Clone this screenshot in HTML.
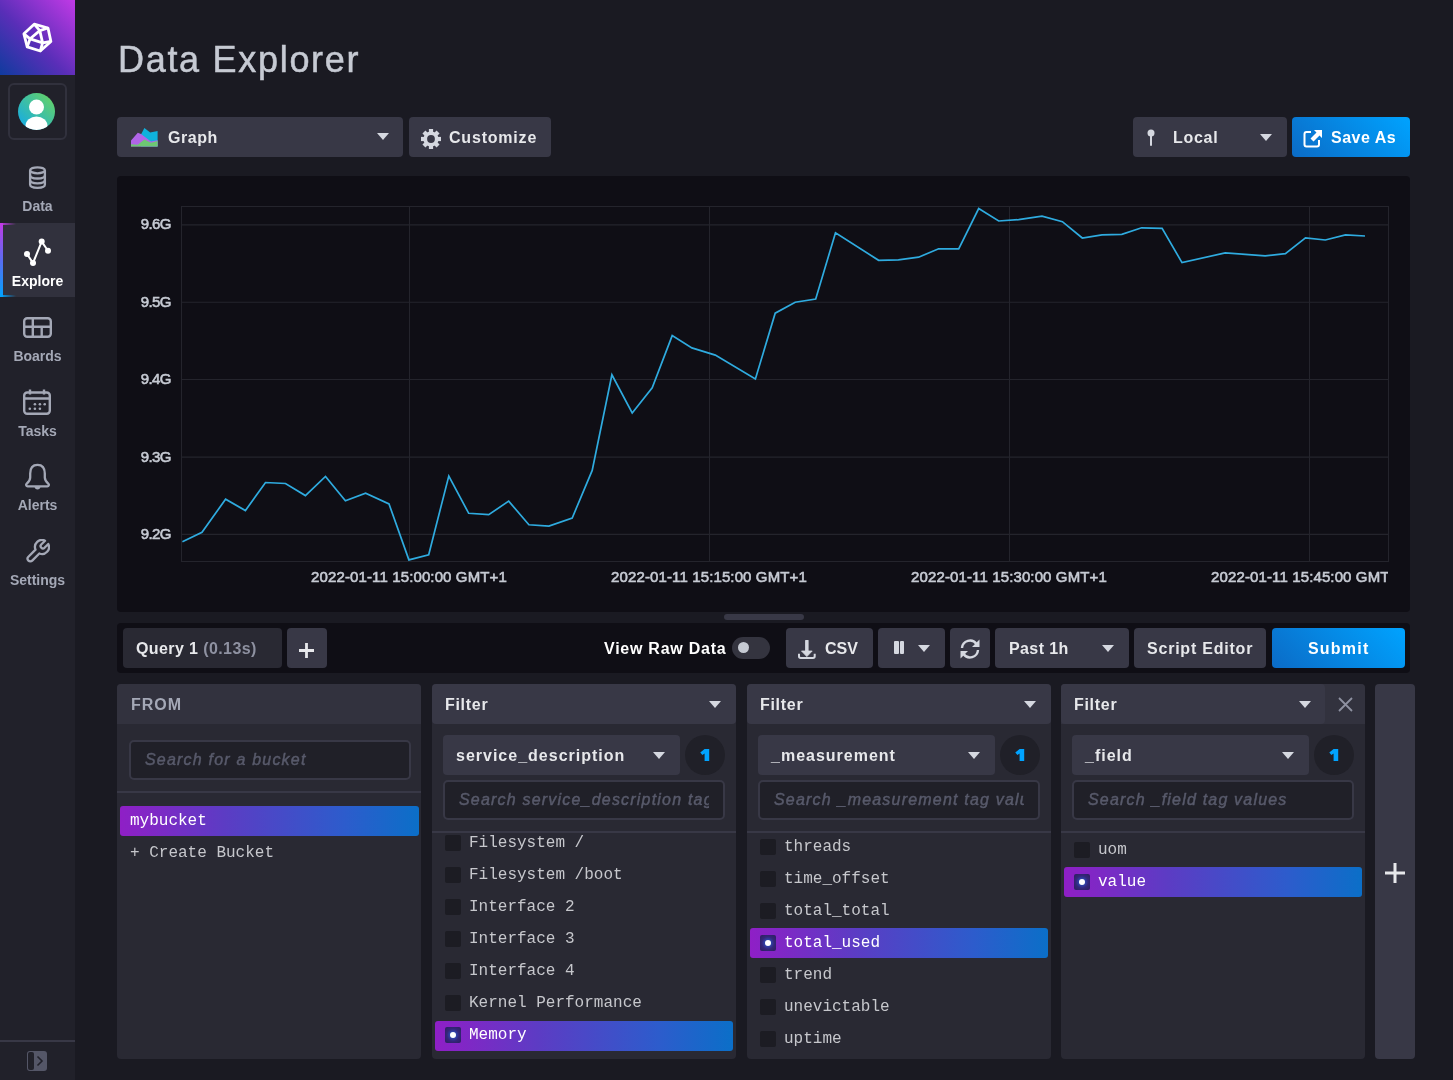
<!DOCTYPE html>
<html><head><meta charset="utf-8">
<style>
*{box-sizing:border-box;margin:0;padding:0}
html,body{width:1453px;height:1080px;overflow:hidden;background:#1a1a22;font-family:"Liberation Sans",sans-serif;color:#e7e8eb}
.a{position:absolute}
.nl{position:absolute;left:0;width:75px;text-align:center;font-weight:bold;font-size:14px;line-height:16px;color:#a4a8b6;white-space:nowrap}
.btn{position:absolute;background:#383846;border-radius:4px;height:40px;font-weight:bold;font-size:16px;color:#e7e8eb;white-space:nowrap}
.bt{position:absolute;top:12px;line-height:18px}
.caret{position:absolute;width:0;height:0;border-left:6px solid transparent;border-right:6px solid transparent;border-top:7px solid #d5d8e0}
.card{position:absolute;top:684px;height:375px;background:#292933;border-radius:4px}
.inp{position:absolute;height:40px;border:2px solid #383846;border-radius:5px;background:#202028;white-space:nowrap;overflow:hidden}
.ph{position:absolute;left:14px;top:8px;width:250px;overflow:hidden;white-space:nowrap;line-height:20px;font-style:italic;font-weight:normal;font-size:16px;color:#585a6b;-webkit-text-stroke:0.45px #585a6b;letter-spacing:1.2px}
.li{position:absolute;font-family:"Liberation Mono",monospace;font-size:16px;line-height:20px;color:#c6c7cc;white-space:pre}
.cb{position:absolute;width:16px;height:16px;background:#1c1c23;border-radius:2px}
.sel{position:absolute;background:linear-gradient(90deg,#8f1fc6 0%,#5c3cc4 35%,#2d5ccc 75%,#0b6fc8 100%);border-radius:3px}
.ylab{position:absolute;left:0;width:54px;text-align:right;font-size:15px;line-height:18px;font-weight:normal;-webkit-text-stroke:0.6px #c6cad3;letter-spacing:-0.55px;color:#c6cad3}
.xlab{position:absolute;top:392px;width:200px;text-align:center;font-size:15px;line-height:18px;font-weight:normal;-webkit-text-stroke:0.6px #c6cad3;color:#c6cad3;white-space:nowrap;letter-spacing:0.12px}
</style></head>
<body>
<div style="position:absolute;left:0;top:0;width:1453px;height:1080px;will-change:transform">
<div class="a" style="left:0;top:0;width:75px;height:1080px;background:#21212a"></div>
<div class="a" style="left:0;top:0;width:75px;height:75px;background:linear-gradient(45deg,#0f3b9e 0%,#5a2eb8 45%,#c13ae6 100%)"></div>
<svg class="a" style="left:21px;top:21px" width="34" height="34" viewBox="0 0 34 34">
  <g fill="none" stroke="#fff" stroke-width="2.8" stroke-linejoin="round">
    <path d="M13.2 3.2 L27 7 L29.9 20.5 L19.3 30 L6.2 25.8 L2.9 12.8 Z"/>
    <path d="M9.1 17.8 L18.8 9.6 L21.6 21.8 Z"/>
    <path d="M13.2 3.2 L18.8 9.6 L27 7 M29.9 20.5 L21.6 21.8 L19.3 30 M6.2 25.8 L9.1 17.8 L2.9 12.8"/>
  </g>
</svg>
<div class="a" style="left:8px;top:83px;width:59px;height:57px;border:2px solid #31313d;border-radius:6px"></div>
<svg class="a" style="left:18px;top:93px" width="37" height="37" viewBox="0 0 37 37">
  <defs><linearGradient id="av" x1="0" y1="1" x2="1" y2="0"><stop offset="0" stop-color="#0ea8f0"/><stop offset="1" stop-color="#6cd65a"/></linearGradient>
  <clipPath id="avc"><circle cx="18.5" cy="18.5" r="18.5"/></clipPath></defs>
  <circle cx="18.5" cy="18.5" r="18.5" fill="url(#av)"/>
  <g clip-path="url(#avc)" fill="#fff"><circle cx="18.5" cy="14" r="7.5"/><ellipse cx="18.5" cy="33" rx="11" ry="9.5"/></g>
</svg>
<svg class="a" style="left:28px;top:166px" width="19" height="23" viewBox="0 0 19 23">
  <g fill="none" stroke="#a4a8b6" stroke-width="2.3">
    <ellipse cx="9.5" cy="4.3" rx="7.4" ry="3"/>
    <path d="M2.1 4.3 V18.5 C2.1 20.6 5.4 21.8 9.5 21.8 C13.6 21.8 16.9 20.6 16.9 18.5 V4.3"/>
    <path d="M2.1 9.2 C2.1 11.3 5.4 12.5 9.5 12.5 C13.6 12.5 16.9 11.3 16.9 9.2"/>
    <path d="M2.1 14 C2.1 16.1 5.4 17.3 9.5 17.3 C13.6 17.3 16.9 16.1 16.9 14"/>
  </g>
</svg>
<div class="nl" style="top:198px">Data</div>
<div class="a" style="left:0;top:223px;width:75px;height:74px;background:#31313d"></div>
<div class="a" style="left:0;top:223px;width:3px;height:74px;background:linear-gradient(180deg,#c13ae6,#5b6cf0 50%,#00a3ff)"></div>
<div class="a" style="left:0;top:223px;width:16px;height:2px;background:linear-gradient(90deg,#c13ae6,rgba(193,58,230,0))"></div>
<div class="a" style="left:0;top:295px;width:16px;height:2px;background:linear-gradient(90deg,#00a3ff,rgba(0,163,255,0))"></div>
<svg class="a" style="left:22px;top:237px" width="31" height="31" viewBox="0 0 31 31">
  <g fill="#fff"><path d="M5 17 L11 26 L19.7 4.6 L26 13.7" fill="none" stroke="#fff" stroke-width="2"/>
  <circle cx="5" cy="17" r="3"/><circle cx="11" cy="26" r="3"/><circle cx="19.7" cy="4.6" r="3"/><circle cx="26" cy="13.7" r="3"/></g>
</svg>
<div class="nl" style="top:273px;color:#fff">Explore</div>
<svg class="a" style="left:23px;top:317px" width="29" height="21" viewBox="0 0 29 21">
  <g fill="none" stroke="#a4a8b6" stroke-width="2.4"><rect x="1.2" y="1.2" width="26.6" height="18.6" rx="3"/>
  <path d="M1.2 9.8 H27.8 M9.8 1.2 V19.8 M18.7 9.8 V19.8"/></g>
</svg>
<div class="nl" style="top:348px">Boards</div>
<svg class="a" style="left:23px;top:389px" width="28" height="26" viewBox="0 0 28 26">
  <g fill="none" stroke="#a4a8b6" stroke-width="2.4"><rect x="1.2" y="3.5" width="25.6" height="21.3" rx="3"/>
  <path d="M1.2 9.5 H26.8 M7 0.5 V5.5 M21 0.5 V5.5"/></g>
  <g fill="#a4a8b6"><circle cx="11.9" cy="15.2" r="1.3"/><circle cx="16.9" cy="15.2" r="1.3"/><circle cx="21.7" cy="15.2" r="1.3"/><circle cx="6.8" cy="19.8" r="1.3"/><circle cx="11.9" cy="19.8" r="1.3"/><circle cx="16.9" cy="19.8" r="1.3"/></g>
</svg>
<div class="nl" style="top:423px">Tasks</div>
<svg class="a" style="left:24px;top:463px" width="27" height="28" viewBox="0 0 27 28">
  <path d="M13.5 1.8 C8 1.8 6.2 6 6.2 10.5 V14.5 C6.2 17.5 4.5 19 2.6 20.8 C1.6 21.8 2.2 23.3 3.6 23.3 H23.4 C24.8 23.3 25.4 21.8 24.4 20.8 C22.5 19 20.8 17.5 20.8 14.5 V10.5 C20.8 6 19 1.8 13.5 1.8 Z" fill="none" stroke="#a4a8b6" stroke-width="2.3" stroke-linejoin="round"/>
  <path d="M10.5 23.5 C10.5 25.5 12 26.5 13.5 26.5 C15 26.5 16.5 25.5 16.5 23.5 Z" fill="#a4a8b6"/>
</svg>
<div class="nl" style="top:497px">Alerts</div>
<svg class="a" style="left:23px;top:539px" width="27" height="27" viewBox="0 0 27 27">
  <path d="M25.30 4.95 L21.47 8.78 A2.3 2.3 0 0 1 18.22 5.53 L22.05 1.70 A7.0 7.0 0 0 0 12.52 10.66 L5.42 17.76 A2.7 2.7 0 0 0 9.24 21.58 L16.34 14.48 A7.0 7.0 0 0 0 25.30 4.95 Z" fill="none" stroke="#a4a8b6" stroke-width="2.3" stroke-linejoin="round"/>
</svg>
<div class="nl" style="top:572px">Settings</div>
<div class="a" style="left:0;top:1040px;width:75px;height:2px;background:#383846"></div>
<div class="a" style="left:27px;top:1051px;width:20px;height:20px;background:#545667;border-radius:3px"></div>
<div class="a" style="left:28px;top:1052px;width:6px;height:18px;background:#21212a;border-radius:2px"></div>
<svg class="a" style="left:36px;top:1055px" width="8" height="12" viewBox="0 0 8 12"><path d="M1.5 1.5 L6 6 L1.5 10.5" fill="none" stroke="#21212a" stroke-width="1.6"/></svg>
<div class="a" style="left:118px;top:39px;font-size:36px;line-height:42px;color:#c6cad3;white-space:nowrap;letter-spacing:1.7px;-webkit-text-stroke:0.5px #c6cad3">Data Explorer</div>
<div class="btn" style="left:117px;top:117px;width:286px;"><svg class="a" style="left:14px;top:11px" width="27" height="19" viewBox="0 0 27 19">
    <path d="M10 6.5 L13.4 0 L19.2 4.4 L26.6 3.1 L26.6 18.5 L10 18.5 Z" fill="#0fb2dc"/>
    <path d="M0 12.6 L6.8 4.8 L10 6 L20 13.4 L26.6 12.2 L26.6 18.5 L0 18.5 Z" fill="#b065e8"/>
    <path d="M0 16.3 L6.8 16.7 L13.4 11.4 L20 14.7 L26.6 13 L26.6 18.5 L0 18.5 Z" fill="#6dc873"/>
  </svg><span class="bt" style="left:51px;letter-spacing:0.55px">Graph</span><div class="caret" style="left:260px;top:16px"></div></div>
<div class="btn" style="left:409px;top:117px;width:142px;"><svg class="a" style="left:10px;top:10px" width="24" height="24" viewBox="-12 -12 24 24"><g fill="#d5d8e0"><rect x="-2.1" y="-10" width="4.2" height="20" transform="rotate(0)"/><rect x="-2.1" y="-10" width="4.2" height="20" transform="rotate(45)"/><rect x="-2.1" y="-10" width="4.2" height="20" transform="rotate(90)"/><rect x="-2.1" y="-10" width="4.2" height="20" transform="rotate(135)"/><circle r="7.6"/></g><circle r="3.9" fill="#383846"/></svg><span class="bt" style="left:40px;letter-spacing:0.8px">Customize</span></div>
<div class="btn" style="left:1133px;top:117px;width:154px;"><svg class="a" style="left:13px;top:12px" width="10" height="18" viewBox="0 0 10 18"><circle cx="5" cy="4" r="3.5" fill="#d5d8e0"/><rect x="4" y="6" width="2" height="11" rx="1" fill="#d5d8e0"/></svg><span class="bt" style="left:40px;letter-spacing:0.7px">Local</span><div class="caret" style="left:127px;top:17px"></div></div>
<div class="btn" style="left:1292px;top:117px;width:118px;background:linear-gradient(45deg,#0b6bc6,#00a3ff);color:#fff"><svg class="a" style="left:11px;top:12px" width="20" height="19" viewBox="0 0 20 19"><path d="M8 3 H3.5 C2.4 3 1.5 3.9 1.5 5 V15.5 C1.5 16.6 2.4 17.5 3.5 17.5 H14 C15.1 17.5 16 16.6 16 15.5 V11" fill="none" stroke="#fff" stroke-width="2"/><path d="M11 1 H19 V9 L16.5 6.5 L10.5 12.5 L7.5 9.5 L13.5 3.5 Z" fill="#fff"/></svg><span class="bt" style="left:39px;letter-spacing:0.5px">Save As</span></div>
<div class="a" style="left:117px;top:176px;width:1293px;height:436px;background:#0f0e15;border-radius:4px">
  <svg class="a" style="left:0;top:0" width="1293" height="435">
    <g stroke="#24242c" stroke-width="1" shape-rendering="crispEdges" fill="none">
      <rect x="64.5" y="30.5" width="1207" height="355"/>
      
      <path d="M292.5 30.5 V385.5 M592.5 30.5 V385.5 M892.5 30.5 V385.5 M1192.5 30.5 V385.5"/>
    </g>
    <path d="M65 48.9 H1271 M65 126.2 H1271 M65 203.5 H1271 M65 281.1 H1271 M65 358.4 H1271" stroke="#24242c" stroke-width="1.1" fill="none"/>
    <polyline points="65.4,365.8 85.0,356.3 108.6,323.2 128.4,334.6 148.5,306.5 168.5,307.5 188.4,319.6 208.5,300.5 228.4,324.8 248.6,317.2 272.0,327.9 291.9,383.9 311.7,378.7 331.8,300.0 351.7,337.3 371.7,338.7 391.7,325.1 411.9,348.8 431.9,350.1 455.2,342.0 475.2,294.4 494.9,198.8 515.2,237.0 535.2,211.9 555.2,159.6 574.9,171.9 598.3,179.1 638.4,203.0 658.2,137.2 678.2,126.2 698.7,123.0 718.5,56.8 761.6,84.3 781.4,83.9 801.6,81.2 821.6,72.8 841.7,72.8 861.7,32.5 881.7,45.0 901.6,43.6 925.0,40.1 945.4,45.7 965.3,62.0 985.0,58.8 1004.8,58.3 1024.6,51.8 1045.1,52.3 1065.0,86.6 1108.2,76.9 1148.2,79.8 1168.4,77.6 1188.5,61.8 1208.3,64.0 1228.5,58.9 1248.0,60.0" fill="none" stroke="#2fabdf" stroke-width="1.7" stroke-linejoin="miter"/>
  </svg>
  <div class="ylab" style="top:39px">9.6G</div>
  <div class="ylab" style="top:117px">9.5G</div>
  <div class="ylab" style="top:194px">9.4G</div>
  <div class="ylab" style="top:272px">9.3G</div>
  <div class="ylab" style="top:349px">9.2G</div>
  <div class="xlab" style="left:192px">2022-01-11 15:00:00 GMT+1</div>
  <div class="xlab" style="left:492px">2022-01-11 15:15:00 GMT+1</div>
  <div class="xlab" style="left:792px">2022-01-11 15:30:00 GMT+1</div>
  <div class="a" style="left:1092px;top:392px;width:179px;height:20px;overflow:hidden"><div class="xlab" style="left:0;top:0">2022-01-11 15:45:00 GMT+1</div></div>
</div>
<div class="a" style="left:724px;top:614px;width:80px;height:6px;border-radius:3px;background:#383846"></div>
<div class="a" style="left:117px;top:623px;width:1293px;height:50px;background:#0f0e15;border-radius:4px"></div>
<div class="btn" style="left:123px;top:628px;width:159px;background:#292933"><span class="bt" style="left:13px;letter-spacing:0.4px">Query 1 <span style="color:#8e91a1">(0.13s)</span></span></div>
<div class="btn" style="left:287px;top:628px;width:40px;"><svg class="a" style="left:12px;top:15px" width="15" height="15" viewBox="0 0 15 15"><path d="M7.5 0 V15 M0 7.5 H15" stroke="#e7e8eb" stroke-width="2.8"/></svg></div>
<div class="a" style="left:604px;top:640px;font-weight:bold;font-size:16px;line-height:18px;color:#fff;white-space:nowrap;letter-spacing:0.75px">View Raw Data</div>
<div class="a" style="left:732px;top:637px;width:38px;height:22px;border-radius:11px;background:#34343f"></div>
<div class="a" style="left:738px;top:642px;width:11px;height:11px;border-radius:6px;background:#c6cad3"></div>
<div class="btn" style="left:786px;top:628px;width:87px;"><svg class="a" style="left:11px;top:12px" width="20" height="19" viewBox="0 0 20 19"><rect x="8.1" y="0" width="3.5" height="12" rx="0.6" fill="#d5d8e0"/><path d="M4.5 11 H15.2 L9.85 16.6 Z" fill="#d5d8e0" stroke="#d5d8e0" stroke-width="0.8" stroke-linejoin="round"/><path d="M2 13.8 V16.3 Q2 18 3.7 18 H16 Q17.7 18 17.7 16.3 V13.8" fill="none" stroke="#d5d8e0" stroke-width="2"/></svg><span class="bt" style="left:39px">CSV</span></div>
<div class="btn" style="left:878px;top:628px;width:67px;"><div class="a" style="left:16px;top:13px;width:4.5px;height:13px;background:#d5d8e0;border-radius:1px"></div><div class="a" style="left:21.8px;top:13px;width:4.5px;height:13px;background:#d5d8e0;border-radius:1px"></div><div class="caret" style="left:40px;top:17px"></div></div>
<div class="btn" style="left:950px;top:628px;width:40px;"><svg class="a" style="left:9px;top:10px" width="22" height="22" viewBox="0 0 22 22"><g fill="none" stroke="#d5d8e0" stroke-width="2.4"><path d="M3 10 A8 8 0 0 1 17.5 6"/><path d="M19 12 A8 8 0 0 1 4.5 16"/></g><path d="M20.5 1.5 V9 H13 Z" fill="#d5d8e0"/><path d="M1.5 20.5 V13 H9 Z" fill="#d5d8e0"/></svg></div>
<div class="btn" style="left:995px;top:628px;width:134px;"><span class="bt" style="left:14px;letter-spacing:0.4px">Past 1h</span><div class="caret" style="left:107px;top:17px"></div></div>
<div class="btn" style="left:1134px;top:628px;width:132px;"><span class="bt" style="left:13px;letter-spacing:0.78px">Script Editor</span></div>
<div class="btn" style="left:1272px;top:628px;width:133px;background:linear-gradient(45deg,#0b6bc6,#00a3ff);color:#fff"><span class="bt" style="left:36px;letter-spacing:1.2px">Submit</span></div>
<div class="card" style="left:117px;width:304px"></div>
<div class="a" style="left:117px;top:684px;width:304px;height:40px;background:#32323e;border-radius:4px 4px 0 0"></div>
<div class="a" style="left:131px;top:696px;font-weight:bold;font-size:16px;line-height:18px;color:#a4a8b6;letter-spacing:1px">FROM</div>
<div class="inp" style="left:129px;top:740px;width:282px"><span class="ph">Search for a bucket</span></div>
<div class="a" style="left:117px;top:791px;width:304px;height:2px;background:#383846"></div>
<div class="sel" style="left:120px;top:806px;width:299px;height:30px"></div>
<div class="li" style="left:130px;top:811.4px;color:#fff">mybucket</div>
<div class="li" style="left:130px;top:843.4px">+ Create Bucket</div>
<div class="card" style="left:432px;width:304px"></div>
<div class="a" style="left:432px;top:684px;width:304px;height:40px;background:#383846;border-radius:4px"></div>
<div class="a" style="left:445px;top:696px;font-weight:bold;font-size:16px;line-height:18px;color:#e7e8eb;letter-spacing:0.7px">Filter</div>
<div class="caret" style="left:709px;top:701px"></div>
<div class="btn" style="left:443px;top:735px;width:237px;"><span class="bt" style="left:13px;letter-spacing:1.0px">service_description</span><div class="caret" style="left:210px;top:17px"></div></div>
<div class="a" style="left:685px;top:735px;width:40px;height:40px;border-radius:50%;background:#202028"><svg class="a" style="left:0;top:0" width="40" height="40" viewBox="0 0 40 40"><path d="M19.6 13.9 H24.2 V26 H19.6 V18.6 L17.4 20 L15.3 17.5 Z" fill="#00a3ff"/></svg></div>
<div class="inp" style="left:443px;top:780px;width:282px"><span class="ph">Search service_description tag values</span></div>
<div class="a" style="left:432px;top:831px;width:304px;height:2px;background:#383846"></div>
<div class="cb" style="left:445px;top:835.0px"></div>
<div class="li" style="left:469px;top:833.4px;color:#c6c7cc">Filesystem /</div>
<div class="cb" style="left:445px;top:867.0px"></div>
<div class="li" style="left:469px;top:865.4px;color:#c6c7cc">Filesystem /boot</div>
<div class="cb" style="left:445px;top:899.0px"></div>
<div class="li" style="left:469px;top:897.4px;color:#c6c7cc">Interface 2</div>
<div class="cb" style="left:445px;top:931.0px"></div>
<div class="li" style="left:469px;top:929.4px;color:#c6c7cc">Interface 3</div>
<div class="cb" style="left:445px;top:963.0px"></div>
<div class="li" style="left:469px;top:961.4px;color:#c6c7cc">Interface 4</div>
<div class="cb" style="left:445px;top:995.0px"></div>
<div class="li" style="left:469px;top:993.4px;color:#c6c7cc">Kernel Performance</div>
<div class="sel" style="left:435px;top:1020.5px;width:298px;height:30px"></div>
<div class="cb" style="left:445px;top:1027.0px;background:radial-gradient(circle,#2a58d0 0%,#3040a8 30%,#34267a 55%,#2b1f5c 100%)"></div>
<div class="a" style="left:449.7px;top:1031.7px;width:6.6px;height:6.6px;border-radius:50%;background:#fff"></div>
<div class="li" style="left:469px;top:1025.4px;color:#fff">Memory</div>
<div class="card" style="left:747px;width:304px"></div>
<div class="a" style="left:747px;top:684px;width:304px;height:40px;background:#383846;border-radius:4px"></div>
<div class="a" style="left:760px;top:696px;font-weight:bold;font-size:16px;line-height:18px;color:#e7e8eb;letter-spacing:0.7px">Filter</div>
<div class="caret" style="left:1024px;top:701px"></div>
<div class="btn" style="left:758px;top:735px;width:237px;"><span class="bt" style="left:13px;letter-spacing:1.0px">_measurement</span><div class="caret" style="left:210px;top:17px"></div></div>
<div class="a" style="left:1000px;top:735px;width:40px;height:40px;border-radius:50%;background:#202028"><svg class="a" style="left:0;top:0" width="40" height="40" viewBox="0 0 40 40"><path d="M19.6 13.9 H24.2 V26 H19.6 V18.6 L17.4 20 L15.3 17.5 Z" fill="#00a3ff"/></svg></div>
<div class="inp" style="left:758px;top:780px;width:282px"><span class="ph">Search _measurement tag values</span></div>
<div class="a" style="left:747px;top:831px;width:304px;height:2px;background:#383846"></div>
<div class="cb" style="left:760px;top:838.9px"></div>
<div class="li" style="left:784px;top:837.3px;color:#c6c7cc">threads</div>
<div class="cb" style="left:760px;top:870.9px"></div>
<div class="li" style="left:784px;top:869.3px;color:#c6c7cc">time_offset</div>
<div class="cb" style="left:760px;top:902.9px"></div>
<div class="li" style="left:784px;top:901.3px;color:#c6c7cc">total_total</div>
<div class="sel" style="left:750px;top:928.4px;width:298px;height:30px"></div>
<div class="cb" style="left:760px;top:934.9px;background:radial-gradient(circle,#2a58d0 0%,#3040a8 30%,#34267a 55%,#2b1f5c 100%)"></div>
<div class="a" style="left:764.7px;top:939.6px;width:6.6px;height:6.6px;border-radius:50%;background:#fff"></div>
<div class="li" style="left:784px;top:933.3px;color:#fff">total_used</div>
<div class="cb" style="left:760px;top:966.9px"></div>
<div class="li" style="left:784px;top:965.3px;color:#c6c7cc">trend</div>
<div class="cb" style="left:760px;top:998.9px"></div>
<div class="li" style="left:784px;top:997.3px;color:#c6c7cc">unevictable</div>
<div class="cb" style="left:760px;top:1030.9px"></div>
<div class="li" style="left:784px;top:1029.3px;color:#c6c7cc">uptime</div>
<div class="card" style="left:1061px;width:304px"></div>
<div class="a" style="left:1061px;top:684px;width:304px;height:40px;background:#32323e;border-radius:4px 4px 0 0"></div>
<div class="a" style="left:1061px;top:684px;width:264px;height:40px;background:#383846;border-radius:4px"></div>
<svg class="a" style="left:1337.5px;top:696.5px" width="15" height="15" viewBox="0 0 15 15"><path d="M1 1 L14 14 M14 1 L1 14" stroke="#8e91a1" stroke-width="1.8"/></svg>
<div class="a" style="left:1074px;top:696px;font-weight:bold;font-size:16px;line-height:18px;color:#e7e8eb;letter-spacing:0.7px">Filter</div>
<div class="caret" style="left:1298.5px;top:701px"></div>
<div class="btn" style="left:1072px;top:735px;width:237px;"><span class="bt" style="left:13px;letter-spacing:1.0px">_field</span><div class="caret" style="left:210px;top:17px"></div></div>
<div class="a" style="left:1314px;top:735px;width:40px;height:40px;border-radius:50%;background:#202028"><svg class="a" style="left:0;top:0" width="40" height="40" viewBox="0 0 40 40"><path d="M19.6 13.9 H24.2 V26 H19.6 V18.6 L17.4 20 L15.3 17.5 Z" fill="#00a3ff"/></svg></div>
<div class="inp" style="left:1072px;top:780px;width:282px"><span class="ph">Search _field tag values</span></div>
<div class="a" style="left:1061px;top:831px;width:304px;height:2px;background:#383846"></div>
<div class="cb" style="left:1074px;top:841.9px"></div>
<div class="li" style="left:1098px;top:840.3px;color:#c6c7cc">uom</div>
<div class="sel" style="left:1064px;top:867.4px;width:298px;height:30px"></div>
<div class="cb" style="left:1074px;top:873.9px;background:radial-gradient(circle,#2a58d0 0%,#3040a8 30%,#34267a 55%,#2b1f5c 100%)"></div>
<div class="a" style="left:1078.7px;top:878.6px;width:6.6px;height:6.6px;border-radius:50%;background:#fff"></div>
<div class="li" style="left:1098px;top:872.3px;color:#fff">value</div>
<div class="a" style="left:1375px;top:684px;width:40px;height:375px;background:#383846;border-radius:4px"></div>
<svg class="a" style="left:1385px;top:863px" width="20" height="20" viewBox="0 0 20 20"><path d="M10 0 V20 M0 10 H20" stroke="#e7e8eb" stroke-width="3"/></svg>
</div>
</body></html>
